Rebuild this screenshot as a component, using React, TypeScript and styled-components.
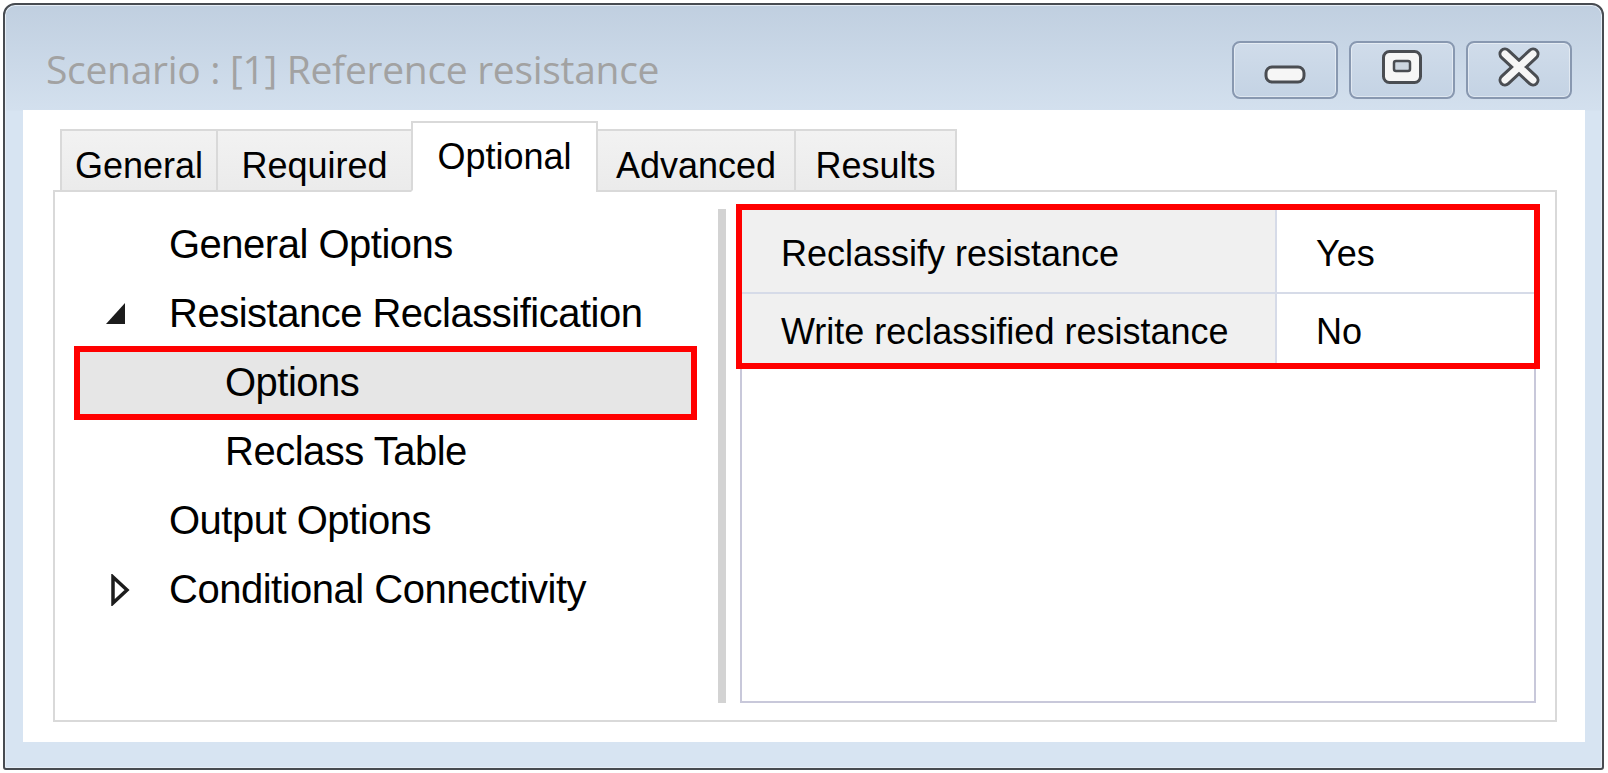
import React from 'react';
import styled, { createGlobalStyle } from 'styled-components';

const GlobalStyle = createGlobalStyle`
  html, body {
    margin: 0;
    padding: 0;
    background: #ffffff;
  }
  body {
    font-family: "Liberation Sans", Arial, sans-serif;
  }
`;

const Window = styled.div`
  box-sizing: border-box;
  margin: 3px 0 0 3px;
  width: 1601px;
  height: 767px;
  border: 2px solid #474b51;
  border-radius: 12px 12px 3px 3px;
  background: linear-gradient(to bottom, #c0cfe0 0px, #d3e0ee 105px, #d7e4f2 106px, #d7e4f2 100%);
  box-shadow: inset 0 0 0 1px #e6eef7;
  display: flex;
  flex-direction: column;
  overflow: hidden;
`;

const TitleBar = styled.div`
  height: 105px;
  display: flex;
  align-items: flex-start;
  padding: 0 30px 0 41px;
`;

const Title = styled.div`
  font-family: "Open Sans", "Noto Sans", sans-serif;
  font-size: 39px;
  color: #a2a2a2;
  margin-top: 37px;
  letter-spacing: -0.3px;
  white-space: nowrap;
`;

const Controls = styled.div`
  margin-left: auto;
  margin-top: 36px;
  display: flex;
  gap: 11px;
`;

const CaptionButton = styled.div`
  box-sizing: border-box;
  width: 106px;
  height: 58px;
  border: 2px solid #8898b0;
  border-radius: 8px;
  background: linear-gradient(to bottom, #d0dcea, #c4d3e4);
  box-shadow: inset 0 0 0 1px rgba(255, 255, 255, 0.45);
  display: flex;
  align-items: center;
  justify-content: center;
`;

const Client = styled.div`
  flex: 1;
  margin: 0 17px 26px 18px;
  background: #ffffff;
  padding: 13px 28px 20px 30px;
  display: flex;
  flex-direction: column;
`;

const TabStrip = styled.div`
  display: flex;
  align-items: flex-end;
  height: 69px;
  padding-left: 9px;
  position: relative;
  z-index: 1;
  margin-bottom: -2px;
`;

const Tab = styled.div<{ $active?: boolean; $width: number }>`
  box-sizing: border-box;
  width: ${(p) => p.$width}px;
  height: ${(p) => (p.$active ? '71px' : '63px')};
  margin-left: -2px;
  padding-top: ${(p) => (p.$active ? '13px' : '14px')};
  text-align: center;
  font-size: 36px;
  color: #000;
  border: 2px solid #d9d9d9;
  border-bottom: ${(p) => (p.$active ? '2px solid #ffffff' : '2px solid #d9d9d9')};
  background: ${(p) => (p.$active ? '#ffffff' : 'linear-gradient(to bottom, #f2f2f2, #ebebeb)')};
  white-space: nowrap;
`;

const Panel = styled.div`
  flex: 1;
  display: flex;
  border: 2px solid #d9d9d9;
  background: #ffffff;
`;

const Tree = styled.div`
  width: 638px;
  padding: 18px 0 0 25px;
  display: flex;
  flex-direction: column;
`;

const TreeRow = styled.div<{ $level: number; $selected?: boolean }>`
  box-sizing: border-box;
  width: 611px;
  height: ${(p) => (p.$selected ? '62px' : '69px')};
  margin: ${(p) => (p.$selected ? '3.5px 0' : '0')};
  display: flex;
  align-items: center;
  padding-left: ${(p) => 28 + p.$level * 56}px;
  font-size: 40px;
  letter-spacing: -0.5px;
  color: #000;
  background: ${(p) => (p.$selected ? '#e6e6e6' : 'transparent')};
  outline: ${(p) => (p.$selected ? '6px solid #ff0000' : 'none')};
  white-space: nowrap;
`;

const Expander = styled.span`
  width: 61px;
  flex: none;
  display: flex;
  align-items: center;
`;

const Splitter = styled.div`
  width: 8px;
  margin: 17px 0 17px 0;
  background: #d3d3d3;
`;

const Grid = styled.div`
  flex: 1;
  margin: 16px 19px 17px 14px;
  border: 2px solid #c8c8da;
`;

const Rows = styled.div`
  outline: 6px solid #ff0000;
  outline-offset: 0;
`;

const GridRow = styled.div<{ $height: number }>`
  display: flex;
  height: ${(p) => p.$height}px;
  & + & {
    border-top: 2px solid #d6dbe8;
  }
`;

const Cell = styled.div<{ $label?: boolean }>`
  box-sizing: border-box;
  display: flex;
  align-items: center;
  padding: 6px 0 0 39px;
  font-size: 36px;
  color: #000;
  white-space: nowrap;
  width: ${(p) => (p.$label ? '535px' : 'auto')};
  flex: ${(p) => (p.$label ? 'none' : '1')};
  background: ${(p) => (p.$label ? '#f0f0f0' : '#ffffff')};
  border-right: ${(p) => (p.$label ? '2px solid #d6dbe8' : 'none')};
`;

const MinIcon = () => (
  <svg width="42" height="22" viewBox="0 0 42 22" style={{ marginTop: 10 }}>
    <rect x="2" y="3" width="38" height="15" rx="6" fill="#f6f6f6" stroke="#4a4d52" strokeWidth="3" />
  </svg>
);

const MaxIcon = () => (
  <svg width="42" height="36" viewBox="0 0 42 36" style={{ marginTop: -6 }}>
    <rect x="2.5" y="2.5" width="37" height="31" rx="6" fill="#f6f6f6" stroke="#4a4d52" strokeWidth="3" />
    <rect x="13" y="12" width="16" height="10" rx="2" fill="#cdd6e0" stroke="#4a4d52" strokeWidth="2.5" />
  </svg>
);

const CloseIcon = () => (
  <svg width="46" height="40" viewBox="0 0 46 40" style={{ marginTop: -6 }}>
    <path d="M9 7 L37 33 M37 7 L9 33" stroke="#4a4d52" strokeWidth="13" strokeLinecap="round" />
    <path d="M9 7 L37 33 M37 7 L9 33" stroke="#f6f6f6" strokeWidth="7" strokeLinecap="round" />
  </svg>
);

const ExpandedGlyph = () => (
  <svg width="21" height="23" viewBox="0 0 21 23" style={{ marginLeft: -3 }}>
    <path d="M20 1 L20 22 L1 22 Z" fill="#1c1c1c" />
  </svg>
);

const CollapsedGlyph = () => (
  <svg width="20" height="32" viewBox="0 0 20 32" style={{ marginLeft: 2 }}>
    <path d="M3 3 L17 16 L3 29 Z" fill="none" stroke="#1c1c1c" strokeWidth="3.5" strokeLinejoin="miter" />
  </svg>
);

type Node = {
  label: string;
  level: number;
  expander?: 'open' | 'closed';
  selected?: boolean;
};

const nodes: Node[] = [
  { label: 'General Options', level: 0 },
  { label: 'Resistance Reclassification', level: 0, expander: 'open' },
  { label: 'Options', level: 1, selected: true },
  { label: 'Reclass Table', level: 1 },
  { label: 'Output Options', level: 0 },
  { label: 'Conditional Connectivity', level: 0, expander: 'closed' },
];

const tabs = [
  { label: 'General', width: 158 },
  { label: 'Required', width: 197 },
  { label: 'Optional', width: 187 },
  { label: 'Advanced', width: 200 },
  { label: 'Results', width: 163 },
];

const properties = [
  { name: 'Reclassify resistance', value: 'Yes', height: 82 },
  { name: 'Write reclassified resistance', value: 'No', height: 69 },
];

const App = () => {
  return (
    <>
      <GlobalStyle />
      <Window>
        <TitleBar>
          <Title>Scenario : [1] Reference resistance</Title>
          <Controls>
            <CaptionButton>
              <MinIcon />
            </CaptionButton>
            <CaptionButton>
              <MaxIcon />
            </CaptionButton>
            <CaptionButton>
              <CloseIcon />
            </CaptionButton>
          </Controls>
        </TitleBar>
        <Client>
          <TabStrip>
            {tabs.map((t) => (
              <Tab key={t.label} $width={t.width} $active={t.label === 'Optional'}>
                {t.label}
              </Tab>
            ))}
          </TabStrip>
          <Panel>
            <Tree>
              {nodes.map((n) => (
                <TreeRow key={n.label} $level={n.level} $selected={n.selected}>
                  <Expander>
                    {n.expander === 'open' && <ExpandedGlyph />}
                    {n.expander === 'closed' && <CollapsedGlyph />}
                  </Expander>
                  {n.label}
                </TreeRow>
              ))}
            </Tree>
            <Splitter />
            <Grid>
              <Rows>
                {properties.map((p) => (
                  <GridRow key={p.name} $height={p.height}>
                    <Cell $label>{p.name}</Cell>
                    <Cell>{p.value}</Cell>
                  </GridRow>
                ))}
              </Rows>
            </Grid>
          </Panel>
        </Client>
      </Window>
    </>
  );
};

export default App;
